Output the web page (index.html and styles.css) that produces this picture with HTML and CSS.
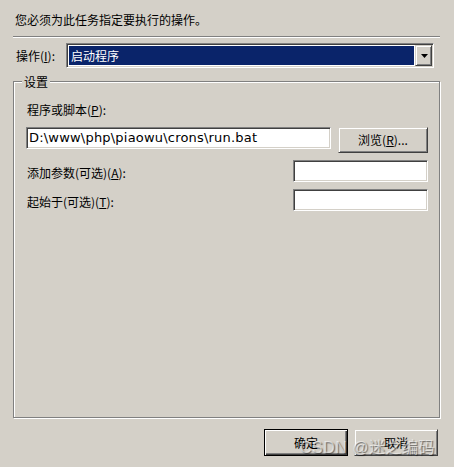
FILE: index.html
```html
<!DOCTYPE html>
<html lang="zh-CN">
<head>
<meta charset="utf-8">
<title>新建操作</title>
<link rel="stylesheet" href="styles.css">
</head>
<body>
<div class="dialog">
  <div class="intro">您必须为此任务指定要执行的操作。</div>
  <div class="sep"></div>
  <div class="action-row">
    <span class="action-label">操作(<u>I</u>):</span>
    <div class="combo">
      <span class="combo-value">启动程序</span>
      <span class="combo-btn">
        <svg width="7" height="4" viewBox="0 0 7 4"><polygon points="0,0 7,0 3.5,4" fill="#000"/></svg>
      </span>
    </div>
  </div>
  <div class="group">
    <div class="legend">设置</div>
    <div class="field-label">程序或脚本(<u>P</u>):</div>
    <div class="program-row">
      <div class="input input-wide">D:\www\php\piaowu\crons\run.bat</div>
      <button class="btn btn-browse">浏览(<u>R</u>)...</button>
    </div>
    <div class="opt-row first">
      <span class="opt-label">添加参数(可选)(<u>A</u>):</span>
      <div class="input input-small"></div>
    </div>
    <div class="opt-row">
      <span class="opt-label">起始于(可选)(<u>T</u>):</span>
      <div class="input input-small"></div>
    </div>
  </div>
  <div class="footer">
    <button class="btn btn-default">确定</button>
    <button class="btn">取消</button>
    <div class="watermark">CSDN @迷之编码</div>
  </div>
</div>
</body>
</html>
```
FILE: styles.css
```css
html, body {
  margin: 0;
  padding: 0;
  background: #d4d0c8;
}
body {
  width: 454px;
  height: 467px;
  overflow: hidden;
  font-family: "Noto Sans CJK SC", "Noto Sans", sans-serif;
  font-size: 12px;
  color: #000;
}
u { text-decoration: underline; text-underline-offset: 1px; }

.dialog {
  display: flex;
  flex-direction: column;
}
.intro {
  padding: 13px 0 0 15px;
  line-height: 14px;
  box-sizing: border-box;
  height: 36px;
}
.sep {
  margin: 0 14px 0 13px;
  height: 0;
  border-top: 1px solid #808080;
  border-bottom: 1px solid #ffffff;
}
.action-row {
  display: flex;
  align-items: center;
  margin-top: 5px;
  padding-left: 16px;
}
.action-label {
  width: 50px;
  line-height: 14px;
}
.combo {
  display: flex;
  width: 368px;
  height: 25px;
  box-sizing: border-box;
  border: 1px solid;
  border-color: #808080 #ffffff #ffffff #808080;
  box-shadow: inset 1px 1px 0 #404040, inset -1px -1px 0 #d4d0c8;
  background: #ffffff;
  padding: 1px;
}
.combo-value {
  flex: 1;
  margin: 1px;
  background: #0a246a;
  color: #ffffff;
  line-height: 19px;
  padding-left: 2px;
}
.combo-btn {
  width: 17px;
  box-sizing: border-box;
  background: #d4d0c8;
  border: 1px solid;
  border-color: #d4d0c8 #404040 #404040 #d4d0c8;
  box-shadow: inset 1px 1px 0 #ffffff, inset -1px -1px 0 #808080;
  display: flex;
  align-items: center;
  justify-content: center;
}
.combo-btn svg { display: block; margin-left: 1px; }

.group {
  margin: 13px 14px 0 13px;
  height: 337px;
  box-sizing: border-box;
  border: 1px solid #808080;
  box-shadow: 1px 1px 0 #ffffff, inset 1px 1px 0 #ffffff;
  padding: 0 11px 0 12px;
  display: flex;
  flex-direction: column;
}
.legend {
  align-self: flex-start;
  margin: -7px 0 0 -4px;
  padding: 0 2px;
  background: #d4d0c8;
  line-height: 14px;
}
.field-label {
  margin-top: 14px;
  padding-left: 1px;
  line-height: 14px;
}
.program-row {
  display: flex;
  align-items: flex-start;
  gap: 7px;
  margin-top: 10px;
}
.input {
  height: 22px;
  box-sizing: border-box;
  border: 1px solid;
  border-color: #808080 #ffffff #ffffff #808080;
  box-shadow: inset 1px 1px 0 #404040, inset -1px -1px 0 #d4d0c8;
  background: #ffffff;
}
.input-wide {
  width: 305px;
  font-family: "DejaVu Sans", sans-serif;
  font-size: 13px;
  letter-spacing: 0.2px;
  line-height: 20px;
  padding-left: 2px;
  white-space: nowrap;
  overflow: hidden;
}
.input-small { width: 135px; }

.btn {
  font-family: "Noto Sans CJK SC", sans-serif;
  font-size: 12px;
  color: #000;
  width: 84px;
  height: 27px;
  padding: 0;
  box-sizing: border-box;
  background: #d4d0c8;
  border: 1px solid;
  border-color: #d4d0c8 #404040 #404040 #d4d0c8;
  box-shadow: inset 1px 1px 0 #ffffff, inset -1px -1px 0 #808080;
  line-height: 14px;
}
.btn-browse {
  width: 90px;
  height: 26px;
}
.btn-default {
  border: 1px solid #000;
  box-shadow: inset 1px 1px 0 #ffffff, inset -1px -1px 0 #404040, inset -2px -2px 0 #808080;
}

.opt-row {
  display: flex;
  justify-content: space-between;
  align-items: center;
  margin-top: 7px;
}
.opt-label {
  padding: 3px 0 0 1px;
  line-height: 14px;
}

.footer {
  position: relative;
  display: flex;
  justify-content: flex-end;
  gap: 6px;
  margin-top: 11px;
  padding-right: 16px;
}
.watermark {
  position: absolute;
  left: 300px;
  top: 10px;
  font-family: "Liberation Sans", "Noto Sans CJK SC", sans-serif;
  font-size: 16px;
  letter-spacing: 0.5px;
  line-height: 18px;
  white-space: nowrap;
  color: rgba(255, 255, 255, 0.55);
  text-shadow: 1px 1px 1px rgba(0, 0, 0, 0.5);
  pointer-events: none;
}
```
